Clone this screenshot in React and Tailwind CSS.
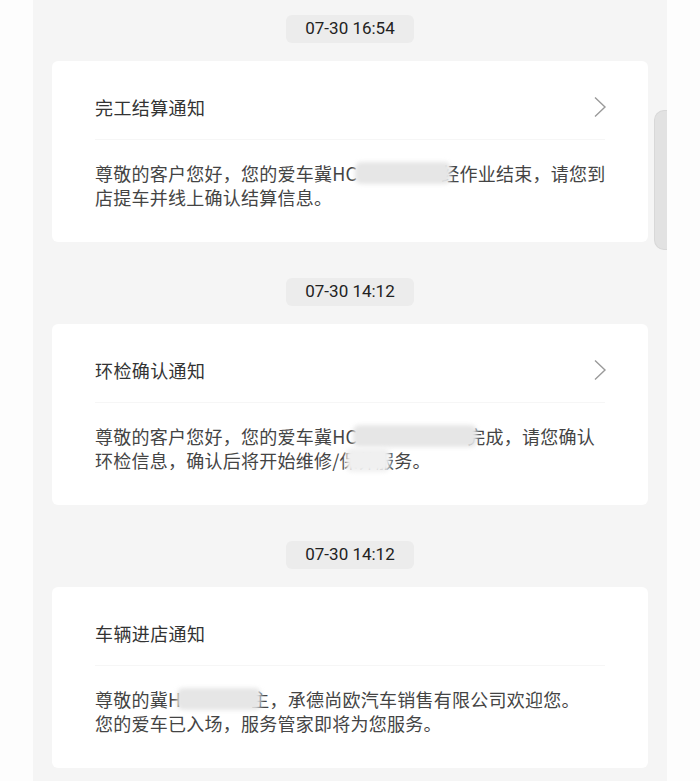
import React from "react";

const font = { fontFamily: '"Noto Sans CJK SC", "Noto Sans", sans-serif' };

function Blob({ className }) {
  // the blurred-out plate number
  return (
    <span
      className={
        "pointer-events-none absolute top-[1px] bottom-[1px] rounded-[6px] bg-[#e6e6e6] blur-[2px] " +
        className
      }
    />
  );
}

function Chevron() {
  return (
    <svg width="14" height="22" viewBox="0 0 14 22" fill="none">
      <polyline
        points="2,1.5 12,11 2,20.5"
        stroke="#9a9a9a"
        strokeWidth="1.4"
        strokeLinejoin="miter"
      />
    </svg>
  );
}

function Card({ title, arrow, children }) {
  return (
    <section className="rounded-[6px] bg-white px-[43px] pt-[33px] pb-[33px]">
      <div className="flex h-[26px] items-center justify-between">
        <h3 className="text-[18px] leading-[26px] tracking-[0.4px] text-[#333]">
          {title}
        </h3>
        {arrow && (
          <span className="-mr-[2px]">
            <Chevron />
          </span>
        )}
      </div>
      <div className="mt-[19px] h-px bg-[#f6f6f6]" />
      <div className="mt-[21px] whitespace-nowrap text-[18px] leading-[24px] tracking-[0.25px] text-[#444]">
        {children}
      </div>
    </section>
  );
}

function Stamp({ time }) {
  return (
    <div className="flex justify-center">
      <span
        className="flex h-[28px] w-[128px] items-center justify-center rounded-[6px] bg-[#ececec] text-[17px] text-[#222]"
        style={{ fontFamily: 'Roboto, "Noto Sans", sans-serif' }}
      >
        {time}
      </span>
    </div>
  );
}

export default function App() {
  return (
    <div className="flex h-[781px] w-[700px] overflow-hidden bg-[#fdfdfd]" style={font}>
      <div className="w-[33px]" />
      <div className="relative w-[634px] bg-[#f5f5f5] px-[19px] pt-[15px]">
        {/* 1 */}
        <Stamp time="07-30 16:54" />
        <div className="mt-[18px]">
          <Card title="完工结算通知" arrow>
            <div>
              尊敬的客户您好，您的爱车冀HC
              <span className="relative inline-block w-[84px]">
                &nbsp;
                <Blob className="-left-[2px] w-[96px]" />
              </span>
              经作业结束，请您到
            </div>
            <div>店提车并线上确认结算信息。</div>
          </Card>
        </div>

        {/* 2 */}
        <div className="mt-[36px]">
          <Stamp time="07-30 14:12" />
        </div>
        <div className="mt-[18px]">
          <Card title="环检确认通知" arrow>
            <div>
              尊敬的客户您好，您的爱车冀HC
              <span className="relative inline-block w-[110px]">
                &nbsp;
                <Blob className="-left-[4px] w-[124px]" />
              </span>
              完成，请您确认
            </div>
            <div>
              环检信息，确认后将开始维修/
              <span className="relative">
                保养服务。
                <Blob className="left-[6px] w-[44px] bg-[#f0f0f0]" />
              </span>
            </div>
          </Card>
        </div>

        {/* 3 */}
        <div className="mt-[36px]">
          <Stamp time="07-30 14:12" />
        </div>
        <div className="mt-[18px]">
          <Card title="车辆进店通知">
            <div>
              尊敬的冀H
              <span className="relative inline-block w-[70px]">
                &nbsp;
                <Blob className="-left-[4px] w-[84px]" />
              </span>
              主，承德尚欧汽车销售有限公司欢迎您。
            </div>
            <div>您的爱车已入场，服务管家即将为您服务。</div>
          </Card>
        </div>

        {/* scrollbar */}
        <div className="absolute top-[110px] right-0 h-[140px] w-[13px] rounded-l-[10px] border border-r-0 border-[#d8d8d8] bg-[#e2e2e2]" />
      </div>
      <div className="flex-1" />
    </div>
  );
}
